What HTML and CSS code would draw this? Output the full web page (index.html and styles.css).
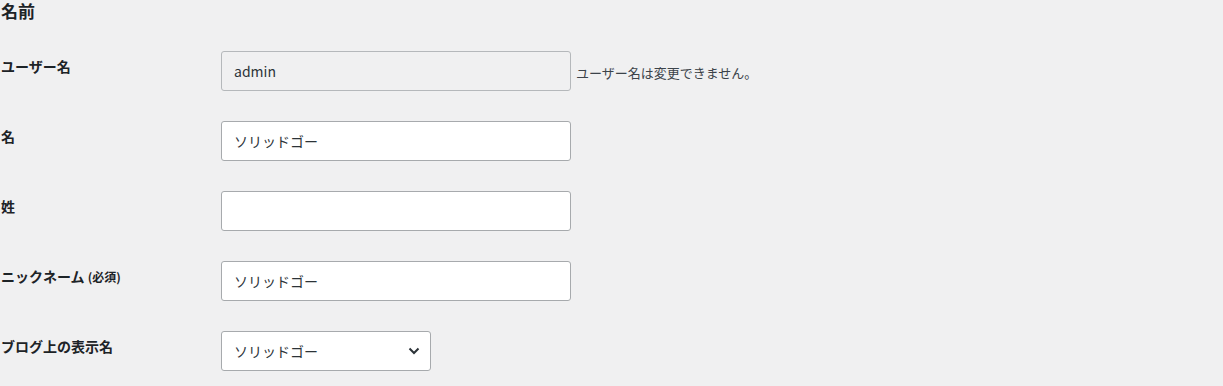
FILE: index.html
```html
<!DOCTYPE html>
<html lang="ja">
<head>
  <meta charset="UTF-8">
  <title>プロフィール</title>
  <link rel="stylesheet" href="styles.css">
</head>
<body>
  <h2 class="section-title">名前</h2>
  <div class="form-table">
    <div class="form-row">
      <label class="form-label" for="user_login">ユーザー名</label>
      <div class="form-field">
        <input class="text-input readonly" type="text" id="user_login" value="admin" disabled>
        <span class="description">ユーザー名は変更できません。</span>
      </div>
    </div>
    <div class="form-row">
      <label class="form-label" for="first_name">名</label>
      <div class="form-field">
        <input class="text-input" type="text" id="first_name" value="ソリッドゴー">
      </div>
    </div>
    <div class="form-row">
      <label class="form-label" for="last_name">姓</label>
      <div class="form-field">
        <input class="text-input" type="text" id="last_name" value="">
      </div>
    </div>
    <div class="form-row">
      <label class="form-label" for="nickname">ニックネーム <span class="required">(必須)</span></label>
      <div class="form-field">
        <input class="text-input" type="text" id="nickname" value="ソリッドゴー">
      </div>
    </div>
    <div class="form-row">
      <label class="form-label" for="display_name">ブログ上の表示名</label>
      <div class="form-field">
        <div class="select-wrap">
          <select class="select-input" id="display_name">
            <option>ソリッドゴー</option>
          </select>
          <svg class="select-arrow" width="12" height="8" viewBox="0 0 12 8">
            <path d="M1.5 1.5 L6 6 L10.5 1.5" fill="none" stroke="#2c3338" stroke-width="2"/>
          </svg>
        </div>
      </div>
    </div>
  </div>
</body>
</html>
```

FILE: styles.css
```css
body {
  margin: 0;
  padding-left: 1px;
  background-color: #f0f0f1;
  color: #1d2327;
  font-family: "Noto Sans CJK JP", "Noto Sans", sans-serif;
  font-size: 14px;
}

.section-title {
  margin: 0;
  font-size: 17px;
  font-weight: 700;
  line-height: 22px;
  height: 36px;
}

.form-row {
  display: flex;
  padding: 15px 0;
}

.form-label {
  width: 220px;
  flex-shrink: 0;
  padding-top: 6px;
  font-weight: 700;
  font-size: 14px;
  line-height: 18px;
}

.required {
  font-size: 12px;
}

.form-field {
  display: flex;
  align-items: center;
}

.text-input,
.select-input {
  box-sizing: border-box;
  width: 350px;
  height: 40px;
  margin: 0;
  padding: 0 12px;
  border: 1px solid #a7aaad;
  border-radius: 3px;
  background-color: #fff;
  color: #2c3338;
  font-family: "Noto Sans CJK JP", "Noto Sans", sans-serif;
  font-size: 14px;
}

.text-input.readonly {
  background-color: #f0f0f1;
  border-color: #b5b8bb;
  color: #2c3338;
}

.description {
  margin-left: 5px;
  padding-top: 2px;
  font-size: 13px;
  color: #3c434a;
}

.select-wrap {
  position: relative;
}

.select-input {
  width: 210px;
  appearance: none;
  -webkit-appearance: none;
}

.select-arrow {
  position: absolute;
  right: 11px;
  top: 16px;
  pointer-events: none;
}
```
